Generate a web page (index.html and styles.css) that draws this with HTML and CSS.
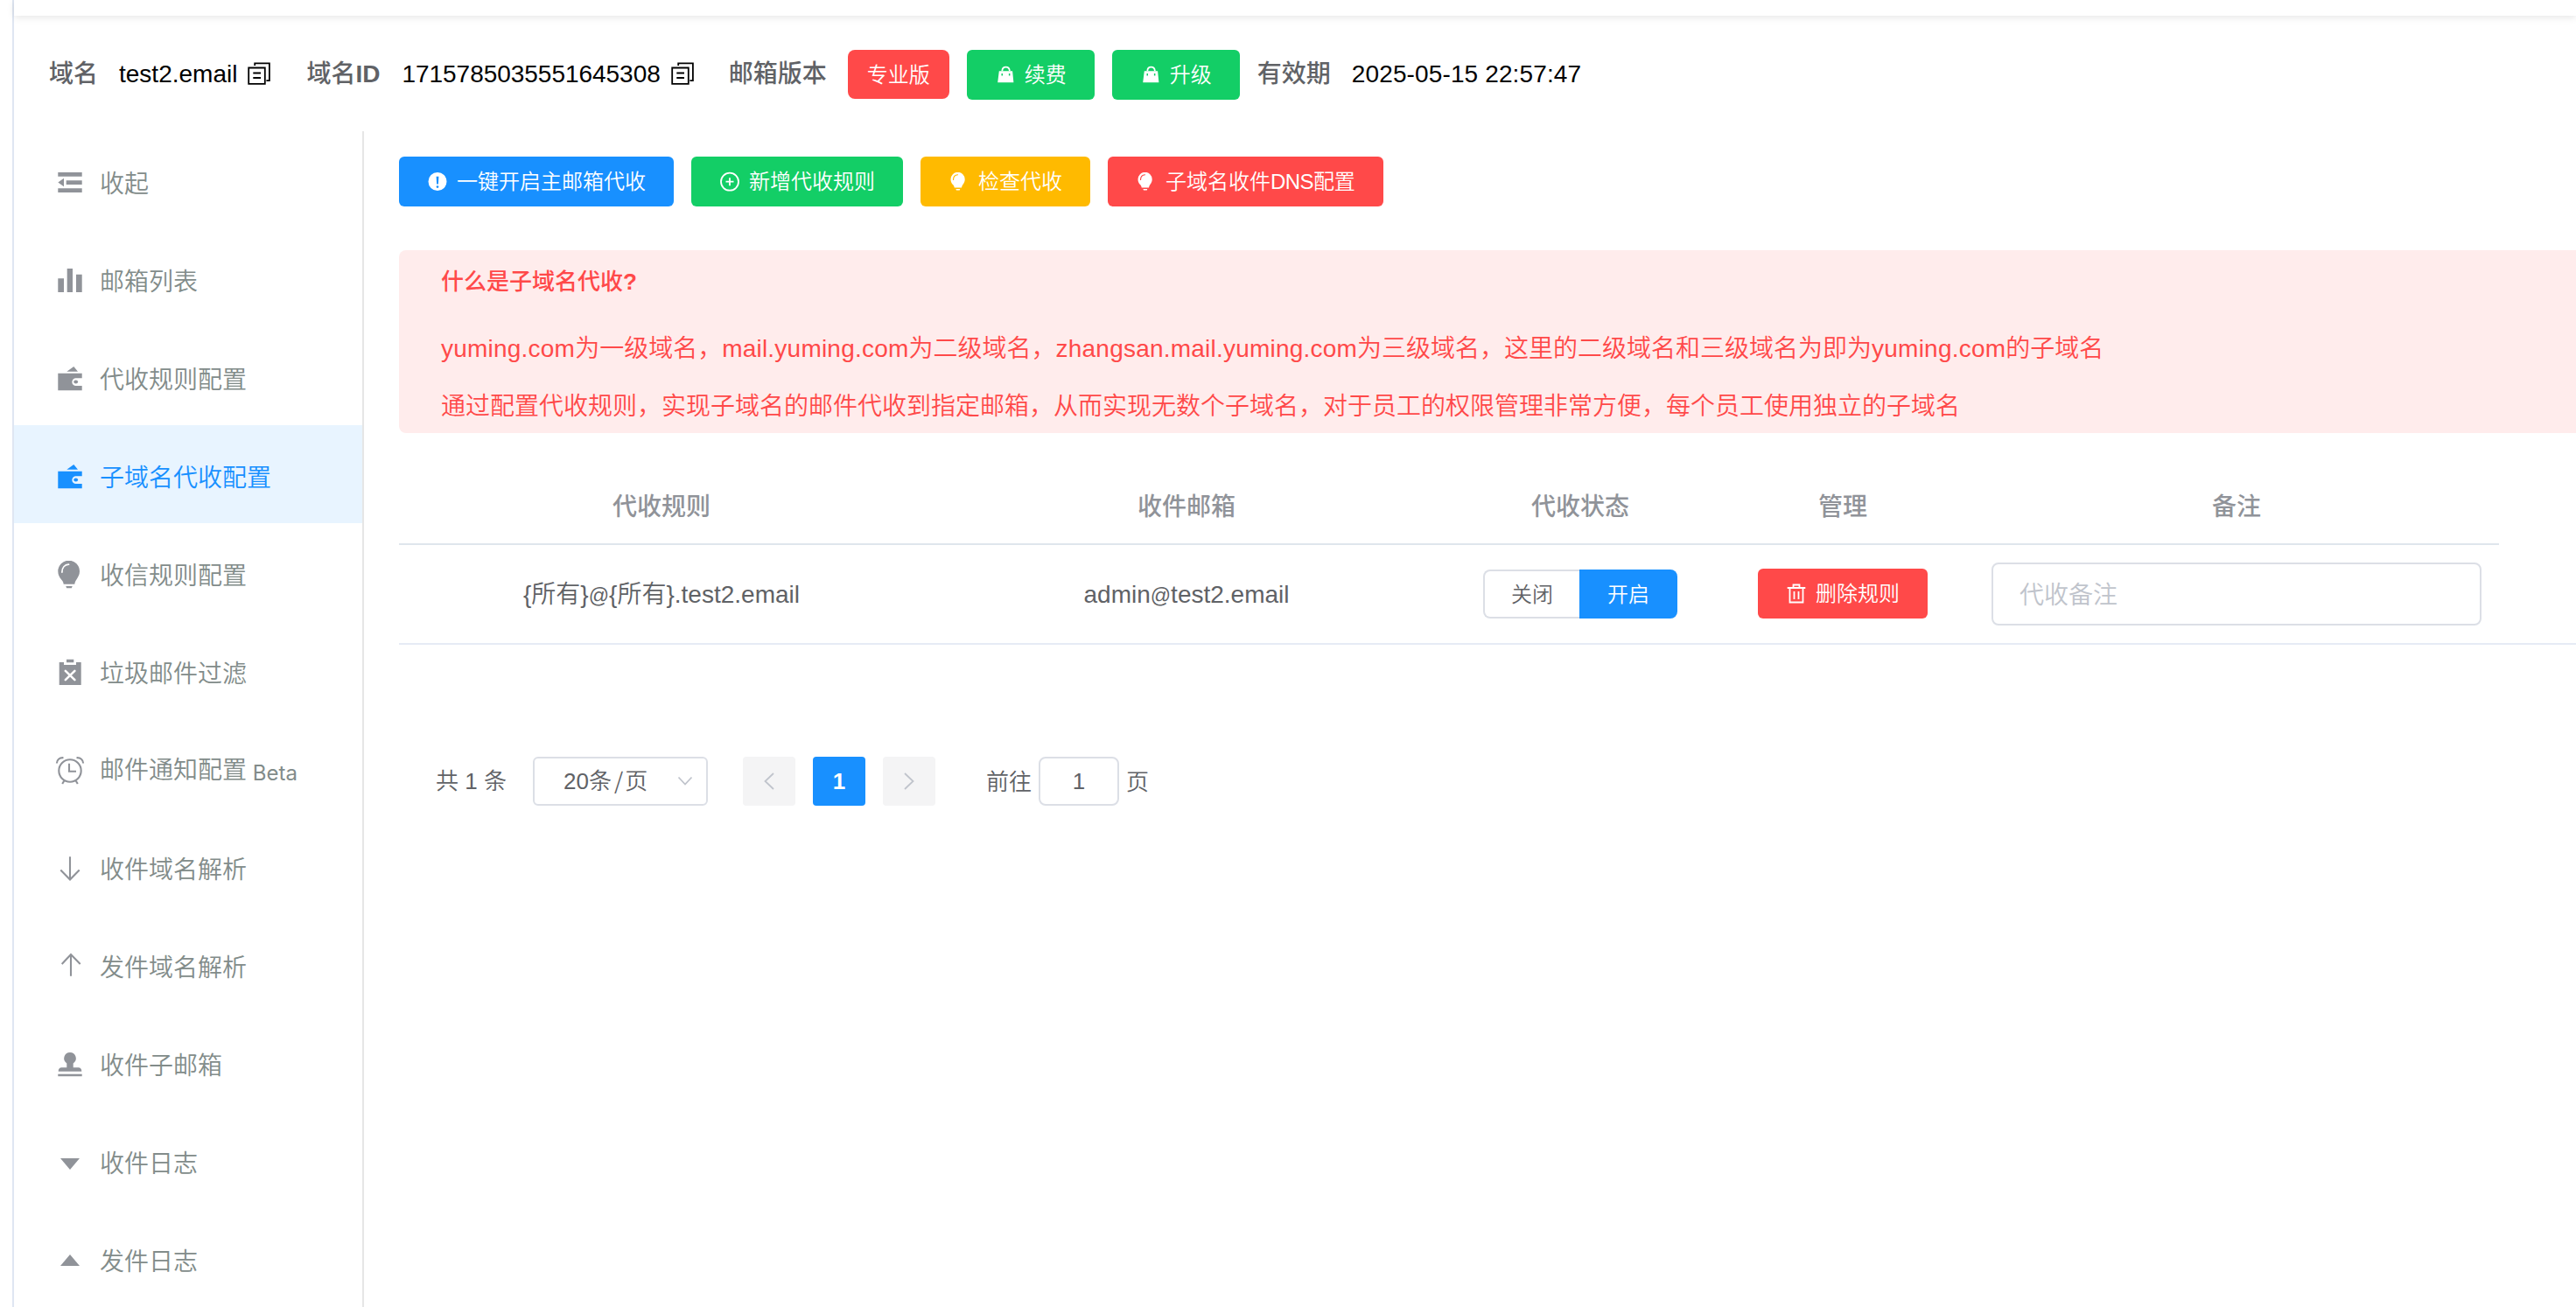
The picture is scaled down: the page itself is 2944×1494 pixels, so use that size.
FILE: index.html
```html
<!DOCTYPE html>
<html lang="zh-CN">
<head>
<meta charset="utf-8">
<title>子域名代收配置</title>
<link rel="stylesheet" href="styles.css">
</head>
<body>
<svg class="sprite" aria-hidden="true">
  <symbol id="bulb" viewBox="0 0 32 32">
    <path fill="currentColor" d="M14.7-.3a12.3 12.3 0 0 1 12.3 12.3c0 4.2-2 7-3.6 9.4-1.2 1.8-1.8 3.2-2.1 5.3H8.7c-.3-2.1-.9-3.5-2.6-5.3C4 19 2.3 16.2 2.3 12A12.3 12.3 0 0 1 14.7-.3zM11.3 29h7.4l-.8 2.3h-5.8z"/>
    <path class="shine" d="M6.9 13C6.900 8 10 4.500 14.500 4.200"/>
  </symbol>
  <symbol id="wallet" viewBox="0 0 32 32">
    <path fill="currentColor" d="M20.300 2 25 7.700H12.300zM2.300 9.700h27.400v5.600h-7a4.350 4.350 0 0 0 0 8.700h7v5.200H2.300z"/>
    <ellipse cx="22.700" cy="19.500" rx="2.400" ry="1.900" fill="currentColor"/>
  </symbol>
  <symbol id="copy" viewBox="0 0 26 26">
    <path class="line" d="M1.200 6.500h18.600v18.300H1.200zM8.200 4V1.400h16.700v19.800h-3.500M6.300 12.500h8.700M6.300 18h8.700"/>
  </symbol>
  <symbol id="bag" viewBox="0 0 24 24">
    <path fill="currentColor" fill-rule="evenodd" d="M4.800 7.200h15.300l1.300 13H3.200zM7.500 10v2.600h1.500V10zm8.400 0v2.600h1.500V10z"/>
    <path class="line" d="M8.300 7.200c.3-6 8.200-6 8.600 0"/>
  </symbol>
</svg>

<div class="page">
  <div class="topbar"></div>
  <header class="info">
    <span class="label">域名</span>
    <span class="value">test2.email</span>
    <svg class="copy"><use href="#copy"/></svg>
    <span class="label gap-id">域名<b>ID</b></span>
    <span class="value val-id">1715785035551645308</span>
    <svg class="copy"><use href="#copy"/></svg>
    <span class="label gap-ver">邮箱版本</span>
    <span class="tag">专业版</span>
    <button class="btn green"><svg><use href="#bag"/></svg>续费</button>
    <button class="btn green"><svg><use href="#bag"/></svg>升级</button>
    <span class="label gap-exp">有效期</span>
    <span class="value date">2025-05-15 22:57:47</span>
  </header>

  <div class="body">
    <nav class="menu">
      <a class="item"><svg viewBox="0 0 32 32"><path fill="currentColor" d="M2.300 4h27.400v4.700H2.300zM11.700 13.200h18v4.700h-18zM2.300 22.300h27.400V27H2.300zM9 10.800v9.500l-6.700-4.700z"/></svg><span>收起</span></a>
      <a class="item"><svg viewBox="0 0 32 32"><path fill="currentColor" d="M2.300 13.300H9V29H2.300zM12.700 2H19v27h-6.300zM23 8.700h6.700V29H23z"/></svg><span>邮箱列表</span></a>
      <a class="item"><svg><use href="#wallet"/></svg><span>代收规则配置</span></a>
      <a class="item active"><svg><use href="#wallet"/></svg><span>子域名代收配置</span></a>
      <a class="item"><svg><use href="#bulb"/></svg><span>收信规则配置</span></a>
      <a class="item"><svg viewBox="0 0 32 32"><path fill="currentColor" d="M12 .700h8.300V4.200H12zM3.700 4H9v3h14V4h5.700v26h-25z"/><path class="cut" d="m10.800 13.900 10.600 10.200m0-10.200-10.600 10.200"/></svg><span>垃圾邮件过滤</span></a>
      <a class="item beta"><svg viewBox="0 0 32 32"><g class="line"><circle cx="16" cy="16" r="12.700"/><path d="M15 7.700v9h8M.900 7.500C.900 3.500 4 .900 8.500 1.200M31.100 7.500c0-4-3.100-6.600-7.600-6.300M9.300 27.500 7.200 31M22.700 27.500l2.100 3.500"/></g></svg><span>邮件通知配置 <small>Beta</small></span></a>
      <a class="item"><svg viewBox="0 0 32 32"><path class="line" d="M16 2.300v26.500M5.300 17.500 16 28.600l10.700-11.100"/></svg><span>收件域名解析</span></a>
      <a class="item"><svg viewBox="0 0 32 32"><path class="line" d="M17 1.700v25M6.700 13 17 2l10.700 11"/></svg><span>发件域名解析</span></a>
      <a class="item"><svg viewBox="0 0 32 32"><path fill="currentColor" d="M16 2a6.800 6.800 0 0 1 3.700 12.500v4.800h5.800c2.500 0 3.800 1.700 3.800 4.400H2.700c0-2.700 1.300-4.400 3.800-4.400h5.800v-4.800A6.800 6.800 0 0 1 16 2zM2.300 26.800h27.400v2.500H2.300z"/></svg><span>收件子邮箱</span></a>
      <a class="item"><svg viewBox="0 0 32 32"><path fill="currentColor" d="M5 11h22L16 24z"/></svg><span>收件日志</span></a>
      <a class="item"><svg viewBox="0 0 32 32"><path fill="currentColor" d="M5 22h22L16 9z"/></svg><span>发件日志</span></a>
    </nav>

    <main class="content">
      <div class="toolbar">
        <button class="btn blue"><svg viewBox="0 0 24 24"><path fill="currentColor" fill-rule="evenodd" d="M12 1a10.500 10.500 0 1 0 0 21 10.500 10.500 0 0 0 0-21zM10.600 5.800h2.800l-.5 8.700h-1.800zM12 16.200a1.400 1.400 0 1 1 0 2.800 1.400 1.400 0 0 1 0-2.800z"/></svg>一键开启主邮箱代收</button>
        <button class="btn green"><svg viewBox="0 0 24 24"><path class="line" d="M12 1.700a10 10 0 1 0 0 20 10 10 0 0 0 0-20zM12 7.200v9M7.500 11.700h9"/></svg>新增代收规则</button>
        <button class="btn yellow"><svg class="small-bulb"><use href="#bulb"/></svg>检查代收</button>
        <button class="btn red"><svg class="small-bulb"><use href="#bulb"/></svg>子域名收件<span class="latin">DNS</span>配置</button>
      </div>

      <section class="alert">
        <h3>什么是子域名代收<b>?</b></h3>
        <p><span class="host">yuming.com</span>为一级域名，<span class="host">mail.yuming.com</span>为二级域名，<span class="host">zhangsan.mail.yuming.com</span>为三级域名，这里的二级域名和三级域名为即为<span class="host">yuming.com</span>的子域名</p>
        <p>通过配置代收规则，实现子域名的邮件代收到指定邮箱，从而实现无数个子域名，对于员工的权限管理非常方便，每个员工使用独立的子域名</p>
      </section>

      <div class="table">
        <div class="row head">
          <div>代收规则</div><div>收件邮箱</div><div>代收状态</div><div>管理</div><div>备注</div>
        </div>
        <div class="row data">
          <div class="text">{所有}<span class="at">@</span>{所有}.test2.email</div>
          <div class="text">admin<span class="at">@</span>test2.email</div>
          <div><span class="switch"><span class="off">关闭</span><span class="on">开启</span></span></div>
          <div><button class="btn red"><svg viewBox="0 0 24 24"><path class="line" d="M1.700 5h20.600M4.500 5v16.500h15V5M8.500 5V1.500h7V5M9.500 9v9M14.500 9v9"/></svg>删除规则</button></div>
          <div class="remark"><span class="input">代收备注</span></div>
        </div>
      </div>

      <div class="pager">
        <span class="total">共 1 条</span>
        <span class="select"><span>20条<span class="cjk">/</span>页</span><svg viewBox="0 0 18 12"><path class="line" d="m1.500 1.500 7.500 8 7.500-8"/></svg></span>
        <span class="pg prev"><svg viewBox="0 0 14 20"><path class="line" d="M12 1 2.500 10l9.500 9"/></svg></span>
        <span class="pg current">1</span>
        <span class="pg next"><svg viewBox="0 0 14 20"><path class="line" d="m2 1 9.500 9L2 19"/></svg></span>
        <span class="goto">前往</span>
        <span class="jump">1</span>
        <span class="unit">页</span>
      </div>
    </main>
  </div>
</div>
</body>
</html>
```
FILE: styles.css
```css
* { box-sizing: border-box; }
body {
  margin: 0;
  width: 2944px;
  height: 1494px;
  overflow: hidden;
  background: #fff;
  color: #606266;
  font: 350 28px/40px "Liberation Sans", "Noto Sans CJK SC", sans-serif;
}
.sprite { position: absolute; width: 0; height: 0; }
svg { display: block; flex: none; overflow: visible; }
.line { fill: none; stroke: currentColor; stroke-width: 1.8; }
.shine { fill: none; stroke: #fff; stroke-width: 1.8; stroke-linecap: round; }
.cut { fill: none; stroke: #fff; stroke-width: 2.6; stroke-linecap: round; }

.page {
  margin-left: 14px;
  height: 1494px;
  border-left: 2px solid #dfe6f2;
  display: flex;
  flex-direction: column;
}
.topbar { flex: none; height: 18px; background: #fff; box-shadow: 0 2px 8px rgba(0, 0, 0, .1); }

.info { flex: none; height: 132px; padding: 3px 0 0 40px; display: flex; align-items: center; white-space: nowrap; }
.label { margin: -1px 24px 0 0; font-weight: 500; color: #606266; }
.label b { font-weight: 700; }
.value { margin-top: -2px; color: #000; }
.val-id { margin-left: 1px; letter-spacing: -.03px; }
.date { letter-spacing: .13px; }
.copy { width: 26px; height: 26px; margin: -4px 0 0 12px; color: #000; }
.gap-id { margin-left: 41px; }
.gap-ver { margin-left: 40px; }
.gap-exp { margin-left: 20px; }
.tag { height: 56px; margin: -1px 20px 0 0; padding: 0 22px; border-radius: 8px; background: #ff4949; color: #fff; font-size: 24px; line-height: 57px; }
.btn {
  display: inline-flex;
  align-items: center;
  flex: none;
  height: 57px;
  padding: 0 32px;
  border: 0;
  border-radius: 6px;
  color: #fff;
  font: 350 24px/34px "Liberation Sans", "Noto Sans CJK SC", sans-serif;
  white-space: nowrap;
}
.btn svg { width: 24px; height: 24px; margin-right: 10px; }
.btn .small-bulb { width: 21px; height: 21px; margin: 0 12px 0 1px; }
.btn + .btn { margin-left: 20px; }
.blue { background: #1890ff; }
.green { background: #13ce66; }
.yellow { background: #ffba00; }
.yellow .shine { stroke: #ffba00; }
.red .shine { stroke: #ff4949; }
.red { background: #ff4949; }
.yellow .small-bulb { --shine: #ffba00; }
.red .small-bulb { --shine: #ff4949; }
.shine { stroke: var(--shine, #fff); }
.latin { letter-spacing: -.6px; }

.body { flex: 1; display: flex; min-height: 0; }
.menu { flex: none; width: 400px; border-right: 2px solid #e6e6e6; }
.item { display: flex; align-items: center; height: 112px; padding: 6px 0 0 48px; color: #828c8a; white-space: nowrap; }
.item span { padding-top: 3px; }
.item svg { width: 32px; height: 32px; margin-right: 18px; color: #909399; }
.item .line { stroke-width: 2.1; }
.item.active { background: #e8f4ff; color: #1890ff; }
.item.active svg { color: #1890ff; }
.item.beta span { padding-top: 0; margin-top: -1px; }
.item small { position: relative; top: 2px; font: 24px/30px Inter, "Liberation Sans", sans-serif; margin-left: -1px; }

.content { flex: 1; min-width: 0; padding: 29px 0 0 40px; }
.toolbar { display: flex; height: 57px; }
.alert { margin-top: 50px; height: 209px; padding: 18px 48px; border-radius: 8px 0 0 8px; background: #ffecec; color: #ff4949; white-space: nowrap; }
.alert h3 { margin: 0; font-size: 26px; font-weight: 500; line-height: 36px; }
.alert h3 b { font-weight: 700; }
.alert p { margin: 0; line-height: 40px; }
.alert h3 + p { margin-top: 39px; }
.alert p + p { margin-top: 26px; }
.host { letter-spacing: .22px; }

.row { display: grid; grid-template-columns: 600px 600px 300px 300px 600px; width: 2400px; align-items: center; text-align: center; }
.head { height: 128px; padding-top: 43px; border-bottom: 2px solid #dfe6ec; color: #909399; font-weight: 500; }
.data { width: 100%; height: 114px; border-bottom: 2px solid #e6ebf5; }
.data .btn { vertical-align: top; margin-top: -1px; }
.text { padding-top: 2px; }
.at { font-size: 23px; line-height: 1; }
.switch { display: flex; width: 222px; height: 56px; margin: 0 auto; font-size: 24px; line-height: 53px; }
.off { flex: 1; border: 2px solid #dcdfe6; border-right: 0; border-radius: 8px 0 0 8px; }
.on { width: 112px; background: #1890ff; color: #fff; border-radius: 0 8px 8px 0; line-height: 57px; }
.remark { padding: 0 20px; }
.input { display: block; height: 72px; padding: 0 30px; border: 2px solid #dcdfe6; border-radius: 8px; line-height: 71px; text-align: left; color: #c0c4cc; }

.pager { display: flex; align-items: center; height: 56px; margin: 128px 0 0 42px; font-size: 26px; white-space: nowrap; }
.total { width: 111px; }
.select { display: flex; align-items: center; width: 200px; height: 56px; padding: 0 15px 0 33px; border: 2px solid #dcdfe6; border-radius: 6px; justify-content: space-between; }
.select svg { width: 18px; height: 12px; color: #c0c4cc; }
.cjk { margin: 0 2px 0 3px; font-family: "Noto Sans CJK SC", sans-serif; line-height: 1; }
.pg { display: flex; align-items: center; justify-content: center; width: 60px; height: 56px; border-radius: 4px; background: #f4f4f5; color: #c0c4cc; }
.pg svg { width: 14px; height: 20px; }
.prev { margin-left: 40px; }
.current { margin: 0 20px; background: #1890ff; color: #fff; font-weight: 700; }
.goto { margin-left: 58px; padding-top: 1px; }
.unit { padding-top: 1px; }
.jump { width: 92px; height: 56px; margin: 0 8px; border: 2px solid #dcdfe6; border-radius: 8px; text-align: center; line-height: 53px; }
```
